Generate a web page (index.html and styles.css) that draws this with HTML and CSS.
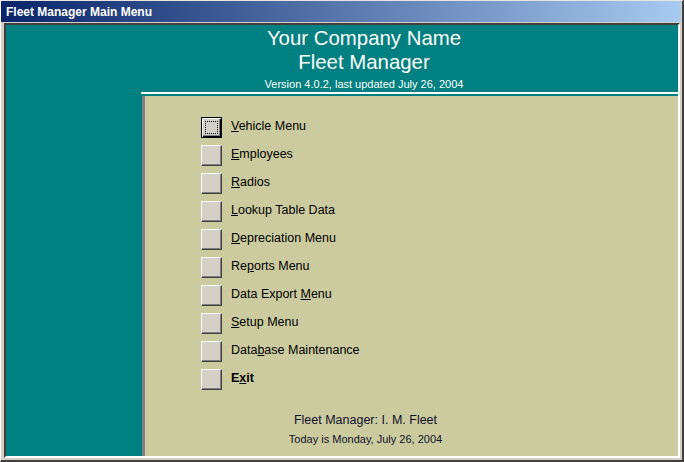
FILE: index.html
```html
<!DOCTYPE html>
<html>
<head>
<meta charset="utf-8">
<link rel="stylesheet" href="styles.css">
</head>
<body>
<div class="window">
  <div class="titlebar">Fleet Manager Main Menu</div>
  <div class="client">
    <div class="header">
      <div class="company">Your Company Name</div>
      <div class="company">Fleet Manager</div>
      <div class="version">Version 4.0.2, last updated July 26, 2004</div>
    </div>
    <div class="rule"></div>
    <div class="main">
      <div class="side"></div>
      <div class="panel">
        <div class="menu">
          <div class="row"><span class="btn focus"></span><span class="label"><u>V</u>ehicle Menu</span></div>
          <div class="row"><span class="btn"></span><span class="label"><u>E</u>mployees</span></div>
          <div class="row"><span class="btn"></span><span class="label"><u>R</u>adios</span></div>
          <div class="row"><span class="btn"></span><span class="label"><u>L</u>ookup Table Data</span></div>
          <div class="row"><span class="btn"></span><span class="label"><u>D</u>epreciation Menu</span></div>
          <div class="row"><span class="btn"></span><span class="label">Re<u>p</u>orts Menu</span></div>
          <div class="row"><span class="btn"></span><span class="label">Data Export <u>M</u>enu</span></div>
          <div class="row"><span class="btn"></span><span class="label"><u>S</u>etup Menu</span></div>
          <div class="row"><span class="btn"></span><span class="label">Data<u>b</u>ase Maintenance</span></div>
          <div class="row"><span class="btn"></span><span class="label bold">E<u>x</u>it</span></div>
        </div>
        <div class="footer">
          <div class="user">Fleet Manager: I. M. Fleet</div>
          <div class="today">Today is Monday, July 26, 2004</div>
        </div>
      </div>
    </div>
  </div>
</div>
</body>
</html>
```
FILE: styles.css
```css
html, body {
  margin: 0;
  padding: 0;
  width: 684px;
  height: 462px;
  overflow: hidden;
  font-family: "Liberation Sans", Arial, sans-serif;
}
.window {
  width: 684px;
  height: 462px;
  box-sizing: border-box;
  background: #d4d0c8;
  border-left: 1px solid #ffffff;
  border-top: 1px solid #e8e6e0;
  border-right: 2px solid #404040;
  border-bottom: 2px solid #404040;
  padding: 0 2px 2px 3px;
  display: flex;
  flex-direction: column;
}
.titlebar {
  height: 21px;
  margin: 0 -1px 1px -3px;
  background: linear-gradient(to right, #0a246a, #a6caf0);
  color: #ffffff;
  font-weight: bold;
  font-size: 12px;
  line-height: 21px;
  padding-left: 5px;
  padding-top: 1px;
  box-sizing: border-box;
  white-space: nowrap;
}
.client {
  flex: 1;
  display: flex;
  flex-direction: column;
  background: #008080;
  border-top: 2px solid #404040;
  border-left: 2px solid #404040;
  border-right: 2px solid #ffffff;
  border-bottom: 2px solid #ffffff;
  min-height: 0;
}
.header {
  height: 67px;
  box-sizing: border-box;
  padding-top: 1px;
  padding-left: 44px;
  color: #ffffff;
  text-align: center;
}
.company {
  font-size: 20.4px;
  line-height: 24px;
  white-space: nowrap;
}
.version {
  font-size: 11px;
  line-height: 14px;
  margin-top: 3px;
  white-space: nowrap;
}
.rule {
  height: 2px;
  margin-left: 135px;
  background: #ffffff;
  margin-bottom: 2px;
}
.main {
  flex: 1;
  display: flex;
  min-height: 0;
}
.side {
  width: 136px;
}
.panel {
  flex: 1;
  background: #cccb9f;
  border-left: 3px solid #808080;
  display: flex;
  flex-direction: column;
  padding-top: 21px;
  box-sizing: border-box;
}
.menu {
  display: flex;
  flex-direction: column;
  gap: 7px;
  padding-left: 56px;
}
.row {
  display: flex;
  align-items: center;
  height: 21px;
  gap: 9px;
}
.btn {
  position: relative;
  width: 21px;
  height: 21px;
  box-sizing: border-box;
  background: #d4d0c8;
  border-top: 1px solid #ffffff;
  border-left: 1px solid #ffffff;
  border-right: 1px solid #404040;
  border-bottom: 1px solid #404040;
  box-shadow: inset -1px -1px 0 #808080;
  flex: none;
}
.btn.focus {
  border: 1px solid #000000;
  box-shadow: inset 1px 1px 0 #ffffff, inset -1px -1px 0 #000000, inset -2px -2px 0 #808080;
}
.btn.focus::after {
  content: "";
  position: absolute;
  left: 3px;
  top: 3px;
  right: 3px;
  bottom: 3px;
  border: 1px dotted #000000;
}
.label {
  font-size: 12.5px;
  line-height: 15px;
  color: #000000;
  white-space: nowrap;
  padding-bottom: 3px;
}
.label u {
  text-underline-offset: 1px;
}
.label.bold {
  font-weight: bold;
}
.footer {
  margin-top: 23px;
  padding-right: 92px;
  text-align: center;
  color: #10102a;
}
.user {
  font-size: 12.5px;
  line-height: 15px;
}
.today {
  font-size: 11px;
  line-height: 14px;
  margin-top: 4px;
}
```
